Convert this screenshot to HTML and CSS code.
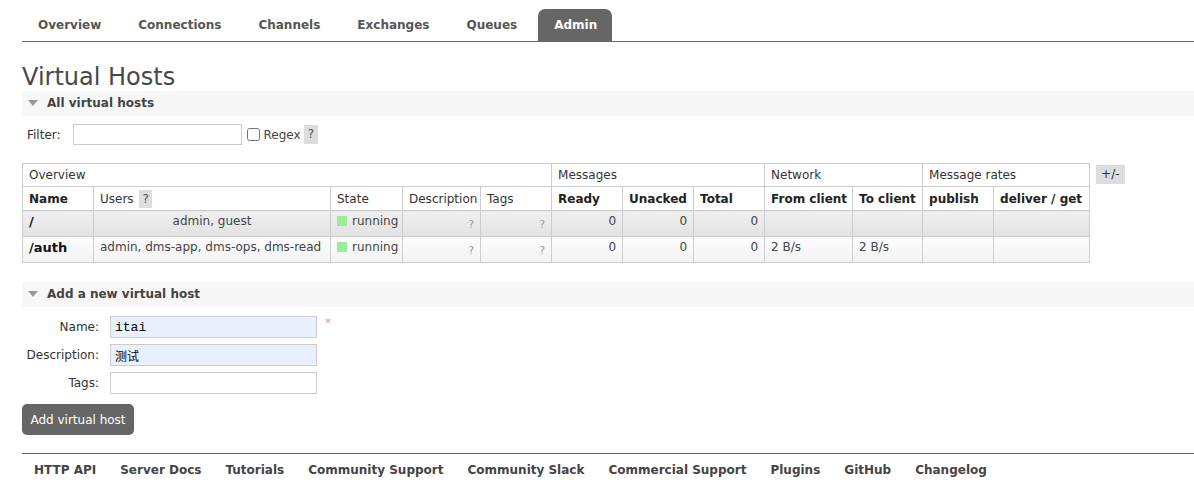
FILE: index.html
```html
<!DOCTYPE html>
<html lang="en">
<head>
    <meta charset="UTF-8">
    <title>RabbitMQ Management</title>
    <link rel="stylesheet" href="styles.css">
</head>
<body>
    <div id="menu">
        <ul class="tabs">
            <li><a href="#">Overview</a></li>
            <li><a href="#">Connections</a></li>
            <li><a href="#">Channels</a></li>
            <li><a href="#">Exchanges</a></li>
            <li><a href="#">Queues</a></li>
            <li class="selected"><a href="#">Admin</a></li>
        </ul>
    </div>

    <div id="main">
        <h1>Virtual Hosts</h1>

        <div class="section">
            <h2><span class="arrow"></span>All virtual hosts</h2>
            <div class="filter">
                <label for="filter">Filter:</label>
                <input type="text" id="filter">
                <input type="checkbox" id="regex">
                <label for="regex" class="regex">Regex</label>
                <span class="help">?</span>
            </div>

            <div class="table-wrap">
                <table class="list">
                    <colgroup>
                        <col style="width:71px"><col style="width:237px"><col style="width:72px">
                        <col style="width:78px"><col style="width:71px"><col style="width:71px">
                        <col style="width:71px"><col style="width:71px"><col style="width:88px">
                        <col style="width:70px"><col style="width:71px"><col style="width:96px">
                    </colgroup>
                    <thead>
                        <tr class="group">
                            <th colspan="5">Overview</th>
                            <th colspan="3">Messages</th>
                            <th colspan="2">Network</th>
                            <th colspan="2">Message rates</th>
                        </tr>
                        <tr class="cols">
                            <th class="bold">Name</th>
                            <th>Users <span class="help">?</span></th>
                            <th>State</th>
                            <th>Description</th>
                            <th>Tags</th>
                            <th class="bold">Ready</th>
                            <th class="bold">Unacked</th>
                            <th class="bold">Total</th>
                            <th class="bold">From client</th>
                            <th class="bold">To client</th>
                            <th class="bold">publish</th>
                            <th class="bold">deliver / get</th>
                        </tr>
                    </thead>
                    <tbody>
                        <tr class="alt1">
                            <td class="name">/</td>
                            <td class="c">admin, guest</td>
                            <td><span class="state"></span>running</td>
                            <td class="r muted">?</td>
                            <td class="r muted">?</td>
                            <td class="r">0</td>
                            <td class="r">0</td>
                            <td class="r">0</td>
                            <td></td>
                            <td></td>
                            <td></td>
                            <td></td>
                        </tr>
                        <tr class="alt2">
                            <td class="name">/auth</td>
                            <td>admin, dms-app, dms-ops, dms-read</td>
                            <td><span class="state"></span>running</td>
                            <td class="r muted">?</td>
                            <td class="r muted">?</td>
                            <td class="r">0</td>
                            <td class="r">0</td>
                            <td class="r">0</td>
                            <td>2 B/s</td>
                            <td>2 B/s</td>
                            <td></td>
                            <td></td>
                        </tr>
                    </tbody>
                </table>
                <span class="toggle">+/-</span>
            </div>
        </div>

        <div class="section">
            <h2><span class="arrow"></span>Add a new virtual host</h2>
            <form class="form">
                <div class="row">
                    <label>Name:</label>
                    <input type="text" class="filled mono" value="itai">
                    <span class="mand">*</span>
                </div>
                <div class="row">
                    <label>Description:</label>
                    <input type="text" class="filled" value="测试">
                </div>
                <div class="row">
                    <label>Tags:</label>
                    <input type="text">
                </div>
                <button type="button">Add virtual host</button>
            </form>
        </div>
    </div>

    <div id="footer">
        <ul>
            <li><a href="#">HTTP API</a></li>
            <li><a href="#">Server Docs</a></li>
            <li><a href="#">Tutorials</a></li>
            <li><a href="#">Community Support</a></li>
            <li><a href="#">Community Slack</a></li>
            <li><a href="#">Commercial Support</a></li>
            <li><a href="#">Plugins</a></li>
            <li><a href="#">GitHub</a></li>
            <li><a href="#">Changelog</a></li>
        </ul>
    </div>
</body>
</html>
```

FILE: styles.css
```css
body {
    margin: 0;
    font-family: "DejaVu Sans", Verdana, sans-serif;
    font-size: 12px;
    color: #333;
    background: #fff;
}
a {
    color: #444;
    text-decoration: none;
}

/* top tabs */
#menu {
    margin: 9px 0 0 22px;
    border-bottom: 1px solid #666;
}
.tabs {
    list-style: none;
    margin: 0;
    padding: 0;
    display: flex;
    gap: 6px;
}
.tabs li a {
    display: block;
    height: 31px;
    padding: 1px 15px 0 16px;
    line-height: 31px;
    font-weight: bold;
    font-size: 12px;
    color: #555;
    border-radius: 7px 7px 0 0;
}
.tabs li.selected a {
    background: #666;
    color: #fff;
}

#main {
    padding-left: 22px;
}
h1 {
    margin: 21px 0 0;
    font-size: 24px;
    font-weight: normal;
    line-height: 28px;
    color: #484848;
}
.section h2 {
    margin: 0;
    height: 25px;
    line-height: 25px;
    background: #f7f7f7;
    font-size: 12px;
    font-weight: bold;
    color: #444;
    padding-left: 6px;
}
.arrow {
    display: inline-block;
    width: 0;
    height: 0;
    border-left: 5px solid transparent;
    border-right: 5px solid transparent;
    border-top: 6px solid #999;
    margin-right: 9px;
    vertical-align: 1px;
}

.filter {
    display: flex;
    align-items: center;
    margin: 8px 0 18px 5px;
    height: 21px;
}
.filter input[type="text"] {
    width: 169px;
    height: 21px;
    box-sizing: border-box;
    border: 1px solid #ccc;
    margin: 0 5px 0 12px;
}
.filter input[type="checkbox"] {
    width: 13px;
    height: 13px;
    margin: 0 4px 0 0;
}
.regex {
    color: #444;
    margin-right: 3px;
}
.help {
    display: inline-block;
    background: #ddd;
    color: #555;
    padding: 0 4px;
    line-height: 19px;
}

.table-wrap {
    display: flex;
    align-items: flex-start;
}
table.list {
    border-collapse: collapse;
    table-layout: fixed;
    width: 1067px;
}
table.list th,
table.list td {
    border: 1px solid #ccc;
    padding: 0 6px;
    text-align: left;
    white-space: nowrap;
    overflow: hidden;
}
tr.group th {
    height: 22px;
    font-weight: normal;
    color: #333;
}
tr.cols th {
    height: 23px;
    font-weight: normal;
}
tr.cols th.bold {
    font-weight: bold;
    color: #222;
}
tr.cols .help {
    line-height: 18px;
    padding: 0 3px;
    margin-left: 2px;
}
tbody td {
    height: 22px;
    vertical-align: top;
    padding-top: 3px !important;
    color: #444;
}
tr.alt1 td {
    background: linear-gradient(#f0f0f0, #e2e2e2);
}
tr.alt2 td {
    background: linear-gradient(#fcfcfc, #f2f2f2);
}
td.name {
    font-weight: bold;
    font-size: 13px;
    color: #111;
}
td.c {
    text-align: center !important;
}
td.r {
    text-align: right !important;
}
td.muted {
    color: #999;
    padding-top: 7px !important;
    height: 18px;
    font-size: 11px;
}
.state {
    display: inline-block;
    width: 10px;
    height: 10px;
    background: #99ee99;
    margin-right: 5px;
    vertical-align: -1px;
}
.toggle {
    margin: 2px 0 0 6px;
    background: #ddd;
    padding: 0 5px;
    line-height: 19px;
    color: #333;
}

.section + .section {
    margin-top: 19px;
}
.form {
    padding-top: 9px;
}
.form .row {
    display: flex;
    align-items: center;
    margin-bottom: 6px;
}
.form label {
    width: 77px;
    text-align: right;
    margin-right: 11px;
    color: #333;
}
.form input {
    width: 207px;
    height: 22px;
    box-sizing: border-box;
    border: 1px solid #ccc;
    padding: 0 4px;
    font-family: "DejaVu Sans", "Noto Sans CJK SC", sans-serif;
    font-size: 12px;
    color: #000;
    background: #fff;
}
.form input.filled {
    background: #e8f0fe;
}
.form input.mono {
    font-family: "Liberation Mono", monospace;
    font-size: 13px;
}
.mand {
    color: #f99;
    margin-left: 8px;
    align-self: flex-start;
    line-height: 14px;
}
.form button {
    margin-top: 4px;
    background: #666;
    color: #fff;
    border: none;
    border-radius: 5px;
    height: 31px;
    width: 112px;
    font-family: "DejaVu Sans", Verdana, sans-serif;
    font-size: 12px;
    padding: 0;
}

#footer {
    margin: 18px 0 0 22px;
    border-top: 1px solid #666;
}
#footer ul {
    list-style: none;
    margin: 0;
    padding: 8px 0 0;
    display: flex;
}
#footer li a {
    display: block;
    padding: 0 12px;
    line-height: 17px;
    font-weight: bold;
    color: #444;
}
```
